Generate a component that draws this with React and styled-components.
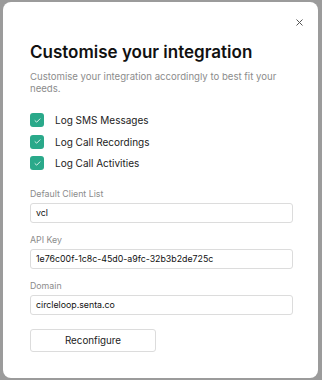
import React from 'react';
import styled, { createGlobalStyle } from 'styled-components';

const GlobalStyle = createGlobalStyle`
    html, body {
        margin: 0;
        padding: 0;
        background: #9b9b9b;
        font-family: Inter, "Noto Sans", sans-serif;
    }
`;

const Backdrop = styled.div`
    width: 322px;
    height: 380px;
    box-sizing: border-box;
    padding: 2px 4px 2px 3px;
    background: #9b9b9b;
`;

const Modal = styled.div`
    position: relative;
    height: 100%;
    box-sizing: border-box;
    background: #fff;
    border-radius: 8px;
    padding: 39px 25px 0 27px;
    display: flex;
    flex-direction: column;
`;

const Close = styled.button`
    position: absolute;
    top: 14px;
    right: 13px;
    width: 12px;
    height: 12px;
    padding: 0;
    border: none;
    background: none;
    display: flex;
    align-items: center;
    justify-content: center;
`;

const Title = styled.h2`
    margin: 0;
    font-size: 17px;
    font-weight: 600;
    color: #111;
    line-height: 22px;
`;

const Intro = styled.p`
    margin: 8px 0 0;
    font-size: 9.6px;
    line-height: 12px;
    color: #8c8c8c;
`;

const Options = styled.div`
    margin-top: 18px;
    display: flex;
    flex-direction: column;
    gap: 7.5px;
`;

const Option = styled.label`
    display: flex;
    align-items: center;
    gap: 11px;
    font-size: 10px;
    color: #222;
    height: 14px;
`;

const Box = styled.span`
    width: 14px;
    height: 14px;
    border-radius: 3px;
    background: #2aa98a;
    display: flex;
    align-items: center;
    justify-content: center;
`;

const Field = styled.div`
    margin-top: ${({ first }) => (first ? '17.5px' : '11px')};
    display: flex;
    flex-direction: column;
    gap: 4px;
`;

const Label = styled.span`
    font-size: 8.8px;
    color: #8c8c8c;
    line-height: 11px;
`;

const Input = styled.div`
    height: 20px;
    box-sizing: border-box;
    border: 1px solid #dcdcdc;
    border-radius: 3px;
    padding: 0 5px;
    font-size: 8.8px;
    color: #111;
    display: flex;
    align-items: center;
`;

const Button = styled.button`
    margin-top: 14px;
    width: 126px;
    height: 23px;
    border: 1px solid #dcdcdc;
    border-radius: 3px;
    background: #fff;
    font-family: Inter, "Noto Sans", sans-serif;
    font-size: 9.8px;
    color: #222;
`;

const Check = () => (
    <svg width="7" height="5" viewBox="0 0 8 6" fill="none">
        <path d="M1 3.2 L3 5 L7 1" stroke="#e8f6f1" strokeWidth="1.1" strokeLinecap="round" strokeLinejoin="round" />
    </svg>
);

const options = ['Log SMS Messages', 'Log Call Recordings', 'Log Call Activities'];

const fields = [
    { label: 'Default Client List', value: 'vcl' },
    { label: 'API Key', value: '1e76c00f-1c8c-45d0-a9fc-32b3b2de725c' },
    { label: 'Domain', value: 'circleloop.senta.co' },
];

export default function App() {
    return (
        <Backdrop>
            <GlobalStyle />
            <Modal>
                <Close aria-label="Close">
                    <svg width="7" height="7" viewBox="0 0 7 7">
                        <path d="M0.5 0.5 L6.5 6.5 M6.5 0.5 L0.5 6.5" stroke="#555" strokeWidth="1" />
                    </svg>
                </Close>
                <Title>Customise your integration</Title>
                <Intro>Customise your integration accordingly to best fit your needs.</Intro>
                <Options>
                    {options.map(option => (
                        <Option key={option}>
                            <Box>
                                <Check />
                            </Box>
                            {option}
                        </Option>
                    ))}
                </Options>
                {fields.map((field, i) => (
                    <Field key={field.label} first={i === 0}>
                        <Label>{field.label}</Label>
                        <Input>{field.value}</Input>
                    </Field>
                ))}
                <div>
                    <Button>Reconfigure</Button>
                </div>
            </Modal>
        </Backdrop>
    );
}
